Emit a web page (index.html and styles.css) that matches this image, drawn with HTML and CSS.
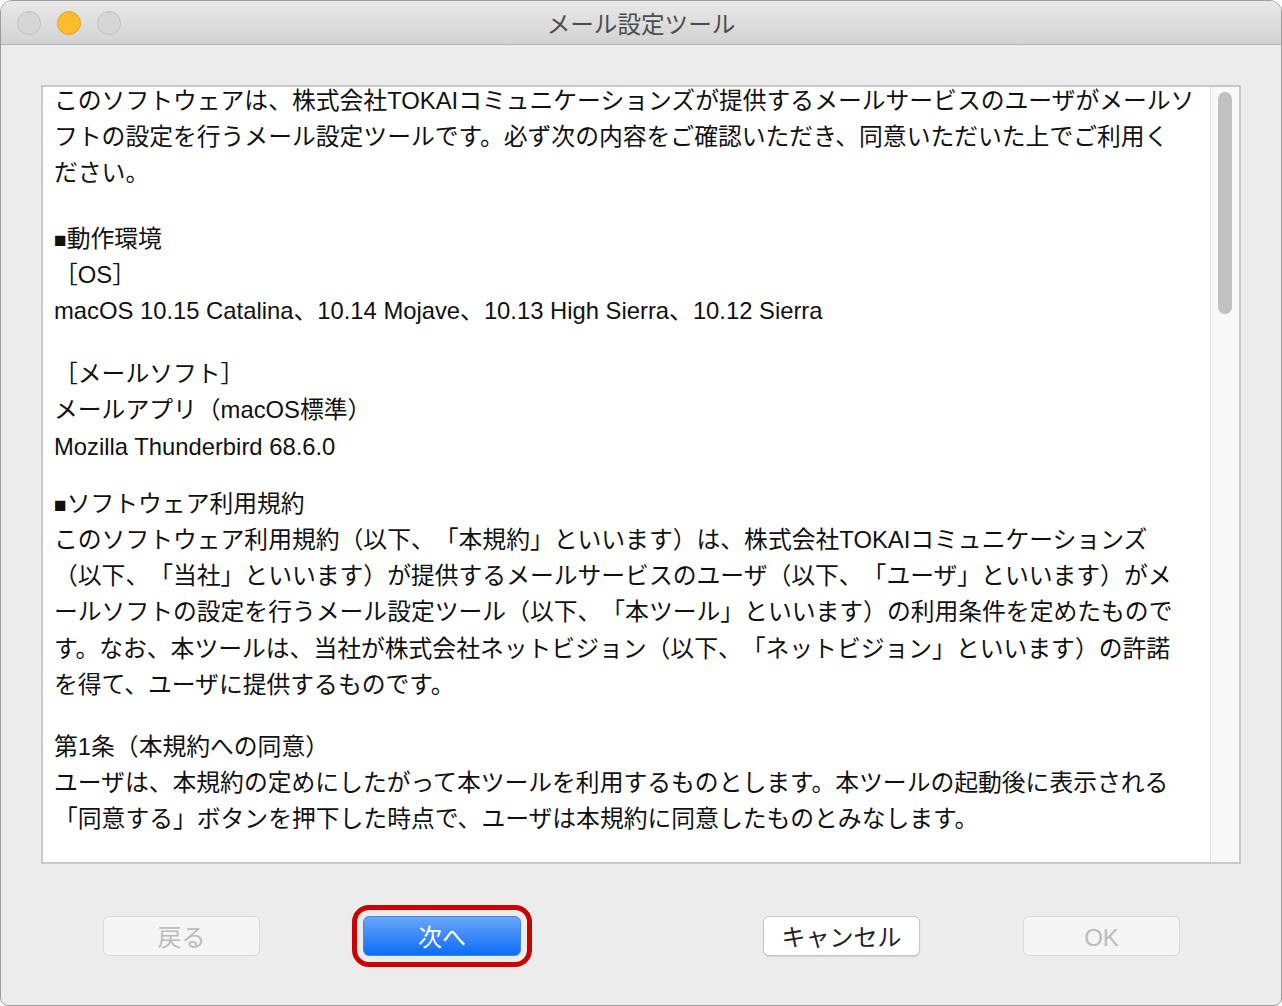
FILE: index.html
```html
<!DOCTYPE html>
<html>
<head>
    <meta charset="utf-8">
    <link rel="stylesheet" href="styles.css">
</head>
<body>
    <div class="window">
        <div class="titlebar">
            <div class="lights">
                <span class="light"></span>
                <span class="light light--min"></span>
                <span class="light"></span>
            </div>
            <div class="title">メール設定ツール</div>
            <div></div>
        </div>

        <div class="content">
            <div class="textbox">
                <div class="text">
                    <p class="p1">このソフトウェアは、株式会社TOKAIコミュニケーションズが提供するメールサービスのユーザがメールソ<br>フトの設定を行うメール設定ツールです。必ず次の内容をご確認いただき、同意いただいた上でご利用く<br>ださい。</p>
                    <p class="p2"><span class="mark">■</span>動作環境<br>［OS］<br>macOS 10.15 Catalina、10.14 Mojave、10.13 High Sierra、10.12 Sierra</p>
                    <p class="p3">［メールソフト］<br>メールアプリ（macOS標準）<br>Mozilla Thunderbird 68.6.0</p>
                    <p class="p4"><span class="mark">■</span>ソフトウェア利用規約<br>このソフトウェア利用規約（以下、「本規約」といいます）は、株式会社TOKAIコミュニケーションズ<br>（以下、「当社」といいます）が提供するメールサービスのユーザ（以下、「ユーザ」といいます）がメ<br>ールソフトの設定を行うメール設定ツール（以下、「本ツール」といいます）の利用条件を定めたもので<br>す。なお、本ツールは、当社が株式会社ネットビジョン（以下、「ネットビジョン」といいます）の許諾<br>を得て、ユーザに提供するものです。</p>
                    <p class="p5">第1条（本規約への同意）<br>ユーザは、本規約の定めにしたがって本ツールを利用するものとします。本ツールの起動後に表示される<br>「同意する」ボタンを押下した時点で、ユーザは本規約に同意したものとみなします。</p>
                </div>
                <div class="scrollbar">
                    <div class="thumb"></div>
                </div>
            </div>

            <div class="buttons">
                <div class="group">
                    <button class="btn" disabled>戻る</button>
                    <button class="btn btn--primary">次へ</button>
                </div>
                <div class="group">
                    <button class="btn btn--white">キャンセル</button>
                    <button class="btn" disabled>OK</button>
                </div>
            </div>
        </div>
    </div>
</body>
</html>
```

FILE: styles.css
```css
body {
    margin: 0;
    background: #ffffff;
    font-family: "Liberation Sans", "Noto Sans CJK JP", sans-serif;
}

.window {
    box-sizing: border-box;
    width: 1282px;
    height: 1006px;
    border: 1px solid #9c9c9c;
    border-radius: 12px 12px 8px 8px;
    background: #ececec;
    overflow: hidden;
}

.titlebar {
    height: 43px;
    display: grid;
    grid-template-columns: 1fr auto 1fr;
    align-items: center;
    background: linear-gradient(#e9e9e9, #d2d2d2);
    border-bottom: 1px solid #b4b4b4;
}

.lights {
    display: flex;
    gap: 16px;
    padding-left: 16px;
}

.light {
    box-sizing: border-box;
    width: 24px;
    height: 24px;
    border-radius: 50%;
    background: #d6d6d6;
    border: 1px solid #bfbfbf;
}

.light--min {
    background: #fdbb2e;
    border-color: #e0a22f;
}

.title {
    font-family: "Noto Sans CJK JP", sans-serif;
    font-size: 23.6px;
    color: #4c4c4c;
    line-height: 30px;
}

.content {
    padding: 40px 40px 0 40px;
}

.textbox {
    box-sizing: border-box;
    height: 779px;
    border: 2px solid #c8c8c8;
    background: #ffffff;
    display: flex;
    overflow: hidden;
}

.text {
    flex: 1;
    padding: 0 0 0 11px;
    font-size: 23.8px;
    line-height: 36.2px;
    color: #111111;
    white-space: nowrap;
    overflow: hidden;
    text-spacing-trim: space-all;
}

.text p {
    margin: 0;
}

.text .p1 { margin-top: -4px; }
.text .p2 { margin-top: 29px; }
.text .p3 { margin-top: 27px; }
.text .p4 { margin-top: 21px; }
.text .p5 { margin-top: 26px; }

.mark {
    font-family: "Liberation Sans", sans-serif;
    font-size: 21px;
    line-height: 0;
}

.scrollbar {
    width: 28px;
    background: #f8f8f8;
    border-left: 1px solid #e6e6e6;
    display: flex;
    justify-content: center;
    padding-top: 5px;
}

.thumb {
    width: 14px;
    height: 222px;
    border-radius: 7px;
    background: #c1c1c1;
}

.buttons {
    display: flex;
    justify-content: space-between;
    padding: 52px 61px 0 62px;
}

.group {
    display: flex;
    gap: 103px;
}

.btn {
    box-sizing: border-box;
    width: 157px;
    height: 40px;
    border-radius: 6px;
    border: 1px solid #d9d9d9;
    background: #f5f5f5;
    color: #bcbcbc;
    font-family: "Liberation Sans", "Noto Sans CJK JP", sans-serif;
    font-size: 24px;
    line-height: 30px;
    padding: 3px 0 0 0;
}

.btn--white {
    background: #ffffff;
    border-color: #c6c6c6;
    color: #222222;
    box-shadow: 0 1px 1px rgba(0,0,0,0.12);
}

.btn--primary {
    width: 158px;
    background: linear-gradient(#69a6fb, #0d6cf6);
    border-color: #3f86f0;
    color: #ffffff;
    outline: 5px solid #cc0000;
    outline-offset: 6px;
}
```
